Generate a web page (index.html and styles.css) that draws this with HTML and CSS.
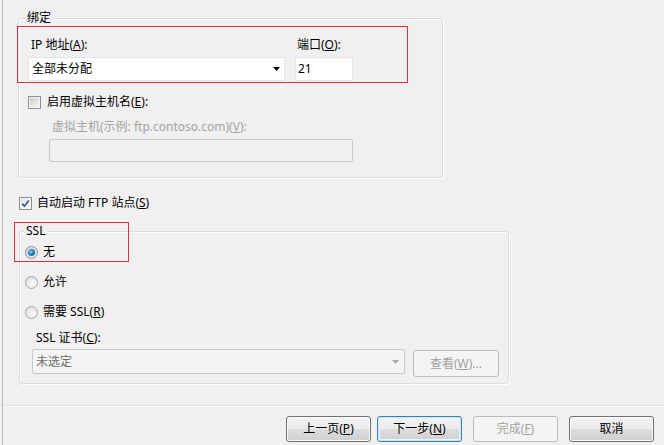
FILE: index.html
```html
<!DOCTYPE html>
<html lang="zh-CN">
<head>
<meta charset="utf-8">
<title>绑定和 SSL 设置</title>
<link rel="stylesheet" href="styles.css">
</head>
<body>
<div class="frame">
  <div class="content">
    <div class="group group-binding">
      <div class="group-title">绑定</div>
      <div class="highlight-row">
        <div class="field field-ip">
          <div class="lbl">IP 地址(<u>A</u>):</div>
          <div class="combo">
            <span class="combo-text">全部未分配</span>
            <svg class="arrow" width="7" height="4" viewBox="0 0 7 4"><polygon points="0,0 7,0 3.5,4" fill="#000"/></svg>
          </div>
        </div>
        <div class="field field-port">
          <div class="lbl lbl-port">端口(<u>O</u>):</div>
          <div class="textbox">21</div>
        </div>
      </div>
      <div class="check-row vhost-row">
        <span class="checkbox"></span>
        <span class="check-text">启用虚拟主机名(<u>E</u>):</span>
      </div>
      <div class="hint">虚拟主机(示例: ftp.contoso.com)(<u>V</u>):</div>
      <div class="textbox disabled vhost-input"></div>
    </div>

    <div class="check-row autostart-row">
      <span class="checkbox checked">
        <svg width="9" height="9" viewBox="0 0 9 9"><path d="M1.2 4.6 L3.4 7.2 L7.8 1.4" fill="none" stroke="#3b5389" stroke-width="1.7"/></svg>
      </span>
      <span class="check-text">自动启动 FTP 站点(<u>S</u>)</span>
    </div>

    <div class="group group-ssl">
      <div class="group-title ssl-title">SSL</div>
      <div class="radio-row first-radio">
        <span class="radio selected"></span>
        <span class="radio-text">无</span>
      </div>
      <div class="radio-row">
        <span class="radio"></span>
        <span class="radio-text">允许</span>
      </div>
      <div class="radio-row">
        <span class="radio"></span>
        <span class="radio-text">需要 SSL(<u>R</u>)</span>
      </div>
      <div class="cert-label">SSL 证书(<u>C</u>):</div>
      <div class="cert-row">
        <div class="combo disabled cert-combo">
          <span class="combo-text">未选定</span>
          <svg class="arrow" width="7" height="4" viewBox="0 0 7 4"><polygon points="0,0 7,0 3.5,4" fill="#a8a8a8"/></svg>
        </div>
        <div class="btn btn-disabled view-btn">查看(<u>W</u>)...</div>
      </div>
    </div>

    <div class="annotation ssl-annotation"></div>
  </div>

  <div class="footer">
    <div class="btn btn-prev">上一页(<u>P</u>)</div>
    <div class="btn btn-default btn-next">下一步(<u>N</u>)</div>
    <div class="btn btn-disabled btn-finish">完成(<u>F</u>)</div>
    <div class="btn btn-cancel">取消</div>
  </div>
</div>
</body>
</html>
```

FILE: styles.css
```css
* {
  box-sizing: border-box;
}

html,
body {
  margin: 0;
  padding: 0;
}

body {
  width: 664px;
  height: 445px;
  overflow: hidden;
  background: #f0f0f0;
  font-family: "Noto Sans", "Noto Sans CJK SC", sans-serif;
  font-size: 12px;
  line-height: 16px;
  color: #000;
}

u {
  text-underline-offset: 1px;
}

.frame {
  margin-left: 2px;
  border-left: 1px solid #b9c0c9;
  height: 445px;
  display: flex;
  flex-direction: column;
}

.content {
  position: relative;
  height: 405px;
  padding: 18px 0 0 15px;
}

/* group boxes */
.group {
  display: flex;
  flex-direction: column;
  align-items: flex-start;
  border: 1px solid #d5dfe5;
  border-radius: 3px;
  box-shadow: inset 1px 1px 0 #fff, 1px 1px 0 #fff;
}

.group-title {
  margin: -9px 0 0 6px;
  padding: 0 2px;
  height: 16px;
  background: #f0f0f0;
}

.group-binding {
  width: 425px;
  padding-bottom: 15px;
}

.group-ssl {
  width: 490px;
  margin: 20px 0 0 1px;
  padding-bottom: 6px;
}

.ssl-title {
  margin-left: 4px;
}

/* red annotation boxes */
.highlight-row {
  display: flex;
  margin-left: -2px;
  width: 391px;
  height: 57px;
  border: 1px solid #d8323f;
  padding: 10px 0 0 10px;
}

.annotation {
  position: absolute;
  border: 1px solid #d8323f;
}

.ssl-annotation {
  left: 11px;
  top: 222px;
  width: 115px;
  height: 40px;
}

/* fields */
.field-ip {
  width: 257px;
}

.field-port {
  width: 58px;
  margin-left: 10px;
}

.lbl {
  height: 16px;
  padding-left: 3px;
  white-space: nowrap;
}

.lbl-port {
  padding-left: 2px;
}

.combo {
  display: flex;
  align-items: center;
  justify-content: space-between;
  margin-top: 4px;
  height: 24px;
  background: #fff;
  border: 1px solid #e1e5ea;
  padding: 0 4px 0 3px;
}

.arrow {
  display: block;
  flex: none;
}

.textbox {
  display: flex;
  align-items: center;
  margin-top: 4px;
  height: 24px;
  background: #fff;
  border: 1px solid #e1e5ea;
  padding-left: 2px;
}

.textbox.disabled {
  background: #f0f0f0;
  border: 1px solid #c5c9cd;
  border-radius: 2px;
}

/* checkboxes */
.check-row {
  display: flex;
  align-items: flex-start;
  height: 16px;
  white-space: nowrap;
}

.checkbox {
  flex: none;
  display: flex;
  align-items: center;
  justify-content: center;
  width: 13px;
  height: 13px;
  margin-top: 2px;
  border: 1px solid #8e8f8f;
  background: linear-gradient(135deg, #c2c6cc 0%, #e4e6e8 55%, #f6f6f6 100%);
  box-shadow: inset 0 0 0 1px #f4f4f4;
}

.checkbox.checked {
  background: linear-gradient(135deg, #dfe3e8 0%, #f4f5f6 60%, #ffffff 100%);
}

.checkbox svg {
  display: block;
}

.vhost-row {
  margin: 11px 0 0 9px;
}

.vhost-row .check-text {
  margin-left: 6px;
}

.hint {
  margin: 9px 0 0 33px;
  height: 16px;
  color: #a3a3a3;
  white-space: nowrap;
}

.vhost-input {
  margin: 4px 0 0 30px;
  width: 304px;
  height: 23px;
}

.autostart-row {
  margin: 17px 0 0 1px;
}

.autostart-row .check-text {
  margin-left: 5px;
}

/* radios */
.radio-row {
  display: flex;
  align-items: center;
  height: 16px;
  margin: 14px 0 0 5px;
  white-space: nowrap;
}

.first-radio {
  margin-top: 5px;
}

.radio {
  flex: none;
  position: relative;
  width: 13px;
  height: 13px;
  border-radius: 50%;
  border: 1px solid #a3a6a9;
  background: radial-gradient(circle at 65% 65%, #fbfbfb 0%, #e6e7e8 60%, #cfd1d4 100%);
}

.radio.selected {
  border-color: #8a8c8f;
}

.radio.selected::after {
  content: "";
  position: absolute;
  left: 2px;
  top: 2px;
  width: 7px;
  height: 7px;
  border-radius: 50%;
  background: radial-gradient(circle at 40% 40%, #8fd0f5 0%, #2a7fc0 45%, #0d3b6d 100%);
  box-shadow: 0 0 0 1px #bfe0f5;
}

.radio-text {
  margin-left: 5px;
}

.cert-label {
  margin: 10px 0 0 16px;
  height: 16px;
  white-space: nowrap;
}

.cert-row {
  display: flex;
  align-items: flex-start;
  margin: 3px 0 0 12px;
}

.combo.disabled {
  background: #f4f4f4;
  border: 1px solid #c5c9cd;
  border-radius: 2px;
  color: #6d6d6d;
}

.cert-combo {
  margin-top: 0;
  width: 373px;
  height: 25px;
  padding-right: 5px;
}

/* buttons */
.btn {
  display: flex;
  align-items: center;
  justify-content: center;
  width: 85px;
  height: 26px;
  border: 1px solid #707070;
  border-radius: 3px;
  background: linear-gradient(#f2f2f2 0%, #ebebeb 48%, #dddddd 52%, #cfcfcf 100%);
  box-shadow: inset 0 0 0 1px #fbfbfb;
  white-space: nowrap;
}

.btn-default {
  border-color: #3c7fb1;
  box-shadow: inset 0 0 0 1px #c7e8fa, inset 0 0 0 2px #e6f4fc;
}

.btn-disabled {
  border-color: #b9bdc1;
  background: #f4f4f4;
  box-shadow: none;
  color: #a0a0a0;
}

.view-btn {
  margin: 1px 0 0 8px;
  width: 86px;
  height: 27px;
}

.footer {
  display: flex;
  justify-content: flex-end;
  border-top: 1px solid #dcdfe3;
  box-shadow: inset 0 1px 0 #fafafa;
  padding: 10px 10px 0 0;
  flex: 1;
}

.btn-next {
  margin-left: 6px;
}

.btn-finish {
  margin-left: 11px;
}

.btn-cancel {
  margin-left: 11px;
}
```
